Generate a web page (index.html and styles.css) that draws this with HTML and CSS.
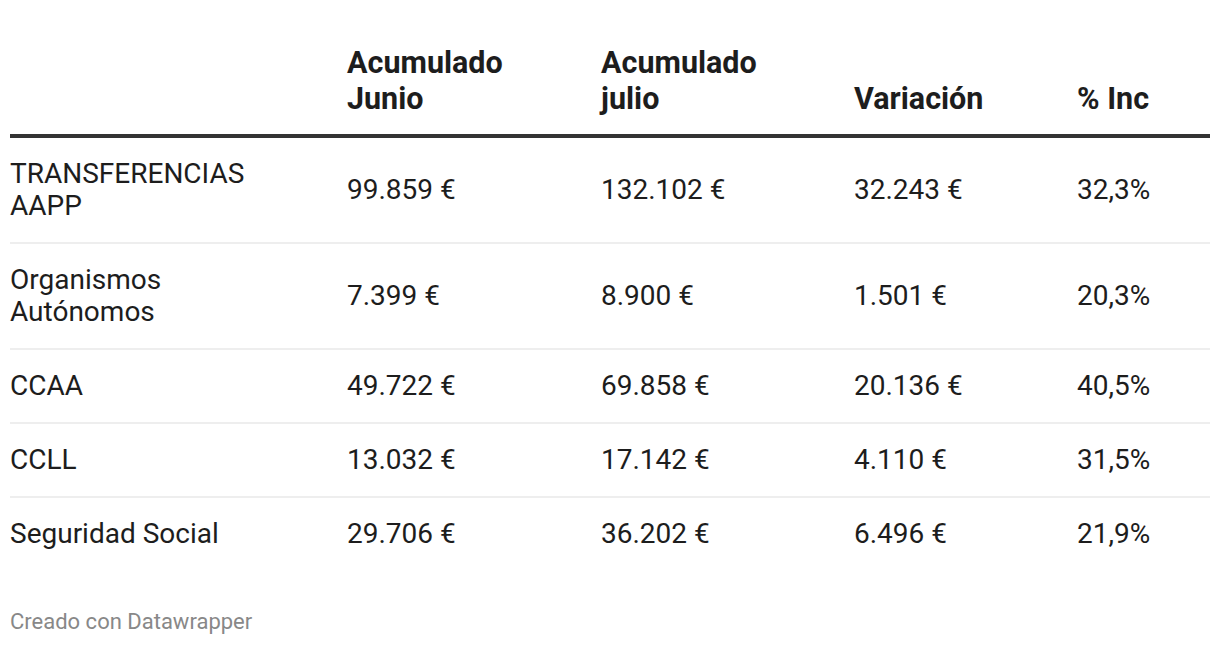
FILE: index.html
```html
<!DOCTYPE html>
<html lang="es">
<head>
<meta charset="utf-8">
<title>Transferencias</title>
<link rel="stylesheet" href="styles.css">
</head>
<body>
<div class="wrap">
  <table class="dw-table">
    <colgroup>
      <col class="c1"><col class="c2"><col class="c3"><col class="c4"><col class="c5">
    </colgroup>
    <thead>
      <tr>
        <th></th>
        <th>Acumulado<br>Junio</th>
        <th>Acumulado<br>julio</th>
        <th>Variación</th>
        <th>% Inc</th>
      </tr>
    </thead>
    <tbody>
      <tr><td>TRANSFERENCIAS<br>AAPP</td><td>99.859 €</td><td>132.102 €</td><td>32.243 €</td><td>32,3%</td></tr>
      <tr><td>Organismos<br>Autónomos</td><td>7.399 €</td><td>8.900 €</td><td>1.501 €</td><td>20,3%</td></tr>
      <tr><td>CCAA</td><td>49.722 €</td><td>69.858 €</td><td>20.136 €</td><td>40,5%</td></tr>
      <tr><td>CCLL</td><td>13.032 €</td><td>17.142 €</td><td>4.110 €</td><td>31,5%</td></tr>
      <tr><td>Seguridad Social</td><td>29.706 €</td><td>36.202 €</td><td>6.496 €</td><td>21,9%</td></tr>
    </tbody>
  </table>
  <div class="footer">Creado con Datawrapper</div>
</div>
</body>
</html>
```
FILE: styles.css
```css
html, body {
  margin: 0;
  padding: 0;
  background: #fff;
}
body {
  font-family: Roboto, "Liberation Sans", sans-serif;
  color: #1d1d1d;
}
.wrap {
  padding: 45px 10px 0 10px;
}
.dw-table {
  width: 1200px;
  border-collapse: collapse;
  table-layout: fixed;
}
.c1 { width: 337px; }
.c2 { width: 254px; }
.c3 { width: 253px; }
.c4 { width: 223px; }
.c5 { width: 133px; }
.dw-table th {
  font-weight: 700;
  font-size: 30.5px;
  line-height: 36px;
  text-align: left;
  vertical-align: bottom;
  padding: 0 0 17px 0;
  border-bottom: 4px solid #333;
}
.dw-table td {
  font-size: 28px;
  line-height: 32px;
  text-align: left;
  vertical-align: middle;
  padding: 20px 0;
  border-bottom: 2px solid #eeeeee;
}
.dw-table tbody tr:last-child td {
  border-bottom: none;
}
.footer {
  margin-top: 38px;
  font-size: 22px;
  line-height: 28px;
  color: #888;
}
```
